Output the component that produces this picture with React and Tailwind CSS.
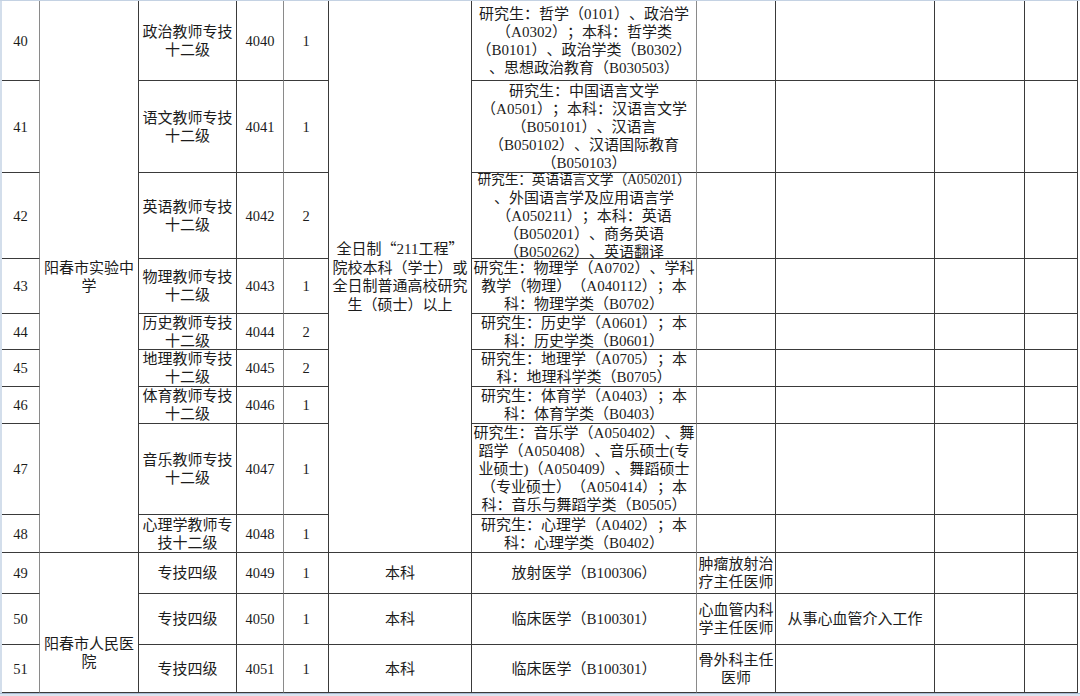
import React from 'react';
import clsx from 'clsx';

const Cell = ({ children, className }) => (
  <div
    className={clsx(
      'flex items-center justify-center text-center overflow-hidden border-r border-b border-[#3a3a3a] leading-[18px] whitespace-nowrap',
      className
    )}
  >
    <div>{children}</div>
  </div>
);

const Lines = ({ lines }) =>
  lines.map((l, i) =>
    typeof l === 'string' ? (
      <div key={i} className="whitespace-nowrap">
        {l}
      </div>
    ) : (
      <div key={i} className={clsx('whitespace-nowrap', l.cls)}>
        {l.t}
      </div>
    )
  );

const teachers = [
  {
    no: '40',
    post: ['政治教师专技', '十二级'],
    code: '4040',
    num: '1',
    major: [
      '研究生：哲学（0101）、政治学',
      '（A0302）；本科：哲学类',
      '（B0101）、政治学类（B0302）',
      '、思想政治教育（B030503）',
    ],
  },
  {
    no: '41',
    post: ['语文教师专技', '十二级'],
    code: '4041',
    num: '1',
    major: [
      '研究生：中国语言文学',
      '（A0501）；本科：汉语言文学',
      '（B050101）、汉语言',
      '（B050102）、汉语国际教育',
      '（B050103）',
    ],
  },
  {
    no: '42',
    post: ['英语教师专技', '十二级'],
    code: '4042',
    num: '2',
    major: [
      { t: '研究生：英语语言文学（A050201）', cls: 'text-[13.8px] tracking-[-0.2px]' },
      '、外国语言学及应用语言学',
      '（A050211）；本科：英语',
      '（B050201）、商务英语',
      '（B050262）、英语翻译',
    ],
  },
  {
    no: '43',
    post: ['物理教师专技', '十二级'],
    code: '4043',
    num: '1',
    major: [
      '研究生：物理学（A0702）、学科',
      '教学（物理）（A040112）；本',
      '科：物理学类（B0702）',
    ],
  },
  {
    no: '44',
    post: ['历史教师专技', '十二级'],
    code: '4044',
    num: '2',
    major: ['研究生：历史学（A0601）；本', '科：历史学类（B0601）'],
  },
  {
    no: '45',
    post: ['地理教师专技', '十二级'],
    code: '4045',
    num: '2',
    major: ['研究生：地理学（A0705）；本', '科：地理科学类（B0705）'],
  },
  {
    no: '46',
    post: ['体育教师专技', '十二级'],
    code: '4046',
    num: '1',
    major: ['研究生：体育学（A0403）；本', '科：体育学类（B0403）'],
  },
  {
    no: '47',
    post: ['音乐教师专技', '十二级'],
    code: '4047',
    num: '1',
    major: [
      '研究生：音乐学（A050402）、舞',
      '蹈学（A050408）、音乐硕士(专',
      '业硕士)（A050409）、舞蹈硕士',
      '（专业硕士）（A050414）；本',
      '科：音乐与舞蹈学类（B0505）',
    ],
  },
  {
    no: '48',
    post: ['心理学教师专', '技十二级'],
    code: '4048',
    num: '1',
    major: ['研究生：心理学（A0402）；本', '科：心理学类（B0402）'],
  },
];

const hospital = [
  { no: '49', major: '放射医学（B100306）', title: ['肿瘤放射治', '疗主任医师'], note: '' },
  { no: '50', major: '临床医学（B100301）', title: ['心血管内科', '学主任医师'], note: '从事心血管介入工作' },
  { no: '51', major: '临床医学（B100301）', title: ['骨外科主任', '医师'], note: '' },
];

const cjk = { fontFamily: '"Noto Sans CJK SC", sans-serif' };

const App = () => {
  return (
    <div
      className="w-[1080px] h-[696px] bg-white text-[#1c1c1c] text-[15px] overflow-hidden flex flex-col [text-spacing-trim:space-all]"
      style={{ fontFamily: '"Liberation Serif", "Noto Sans CJK SC", serif' }}
    >
      <div className="h-[1px] bg-[#c4d2e3]" />
      <div className="flex flex-1 min-h-0">
        <div className="w-[2px] bg-[#d3deeb]" />
        <div className="grid grid-cols-[38px_99px_98px_47px_45px_143px_225px_79px_159px_90px_53px] grid-rows-[80px_92px_86px_55px_36px_37px_37px_91px_38px_41px_51px_48px]">
          {teachers.map((t, i) => (
            <React.Fragment key={t.no}>
              <Cell className="border-r-[#8a8a8a] text-[14.5px]">{t.no}</Cell>
              {i === 0 && (
                <Cell className="row-span-9">
                  <Lines lines={['阳春市实验中', '学']} />
                </Cell>
              )}
              <Cell>
                <Lines lines={t.post} />
              </Cell>
              <Cell className="border-r-[#8a8a8a] text-[14.5px]">{t.code}</Cell>
              <Cell className="text-[14.5px]">{t.num}</Cell>
              {i === 0 && (
                <Cell className="row-span-9">
                  <div className="leading-[18.5px]">
                    <div>
                      全日制<span style={cjk}>“</span>211工程<span style={cjk}>”</span>
                    </div>
                    <div>院校本科（学士）或</div>
                    <div>全日制普通高校研究</div>
                    <div>生（硕士）以上</div>
                  </div>
                </Cell>
              )}
              <Cell className="border-r-[#8a8a8a]">
                <Lines lines={t.major} />
              </Cell>
              <Cell />
              <Cell />
              <Cell />
              <Cell />
            </React.Fragment>
          ))}
          {hospital.map((h, i) => (
            <React.Fragment key={h.no}>
              <Cell className="border-r-[#8a8a8a] text-[14.5px]">{h.no}</Cell>
              {i === 0 && (
                <Cell className="row-span-3 pt-[60px]">
                  <Lines lines={['阳春市人民医', '院']} />
                </Cell>
              )}
              <Cell>专技四级</Cell>
              <Cell className="border-r-[#8a8a8a] text-[14.5px]">{`40${h.no}`}</Cell>
              <Cell className="text-[14.5px]">1</Cell>
              <Cell>本科</Cell>
              <Cell className="border-r-[#8a8a8a]">{h.major}</Cell>
              <Cell>
                <Lines lines={h.title} />
              </Cell>
              <Cell>{h.note}</Cell>
              <Cell />
              <Cell />
            </React.Fragment>
          ))}
        </div>
      </div>
      <div className="h-[3px] bg-[#dce5f0] border-t border-[#a9bcd3]" />
    </div>
  );
};

export default App;
